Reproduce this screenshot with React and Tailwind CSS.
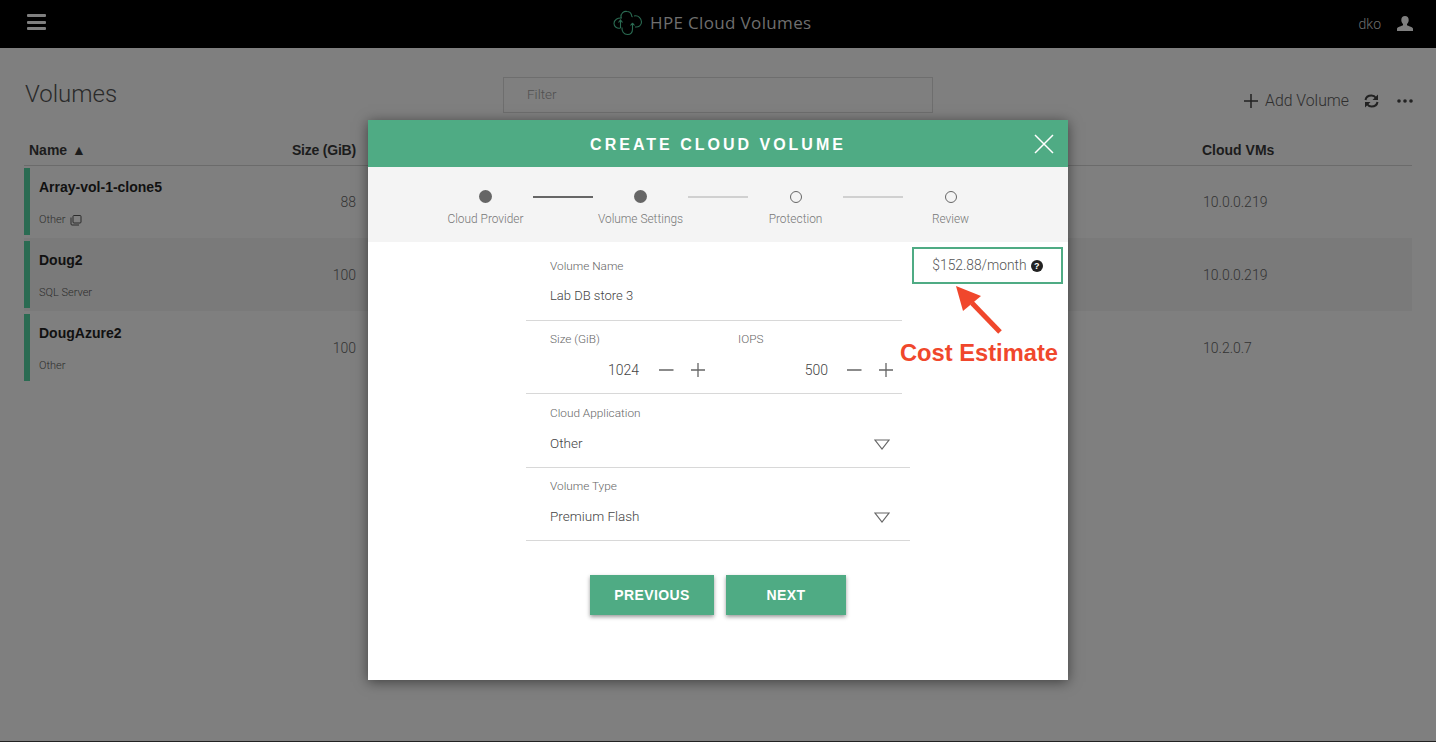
import React from "react";

const sans = "font-['Liberation_Sans',sans-serif]";
const light = "font-['Roboto',sans-serif] font-light";

function Row({ name, sub, size, vm, dark, copy }) {
  return (
    <div className={`h-[73px] flex ${dark ? "bg-[#7a7a7a]" : ""}`}>
      <div className="w-[6px] h-[67px] mt-[3px] bg-[#2a6b52]" />
      <div className="w-[266px] pl-[9px]">
        <div className={`mt-[14px] text-[14px] leading-[16px] font-bold text-[#111111] ${sans}`}>{name}</div>
        <div className={`mt-[18px] flex items-center gap-[5px] text-[11px] leading-[14px] text-[#2c2c2c] ${light}`}>
          {sub}
          {copy && (
            <svg width="12" height="12" viewBox="0 0 12 12" fill="none" stroke="#2c2c2c" strokeWidth="1">
              <rect x="3" y="1.5" width="8" height="7.5" rx="1" />
              <path d="M1 3.500v6.500a1 1 0 0 0 1 1h7" />
            </svg>
          )}
        </div>
      </div>
      <div className={`w-[60px] text-right mt-[28px] text-[14px] leading-[18px] text-[#333333] ${light}`}>{size}</div>
      <div className={`ml-[847px] mt-[28px] text-[14px] leading-[18px] text-[#333333] ${light}`}>{vm}</div>
    </div>
  );
}

function Dot({ filled }) {
  return (
    <div className="w-[13px] h-[13px] flex items-center justify-center">
      {filled ? (
        <div className="w-[13px] h-[13px] rounded-full bg-[#666666]" />
      ) : (
        <div className="w-[12px] h-[12px] ml-[1px] rounded-full border border-[#666666]" />
      )}
    </div>
  );
}

function StepLabel({ children }) {
  return (
    <div className={`w-[155px] text-center text-[11.900px] leading-[16px] text-[#777777] whitespace-nowrap ${light}`}>{children}</div>
  );
}

function PlusMinus({ className }) {
  return (
    <svg className={className} width="48" height="16" viewBox="0 0 48 16" fill="none" stroke="#666666" strokeWidth="1.300">
      <path d="M0 8h14.500M32 8h14M39 1v14" />
    </svg>
  );
}

function Caret() {
  return (
    <svg className="mt-[2px]" width="16" height="11" viewBox="0 0 16 11" fill="none" stroke="#666666" strokeWidth="1.200">
      <path d="M1 1h14L8 10z" />
    </svg>
  );
}

function Select({ label, value, height, pad }) {
  return (
    <div className={`w-[384px] pl-[24px] pr-[20px] border-b border-[#d8d8d8] ${height}`}>
      <div className={`text-[11.800px] leading-[16px] text-[#666666] ${pad} ${light}`}>{label}</div>
      <div className="mt-[13px] flex items-center justify-between">
        <div className={`text-[13.500px] leading-[18px] text-[#444444] ${light}`}>{value}</div>
        <Caret />
      </div>
    </div>
  );
}

export default function App() {
  return (
    <div className="relative w-[1436px] h-[742px] overflow-hidden bg-[#7f7f7f] border-b border-[#222222]">
      <header className="h-[48px] bg-black flex items-start">
        <div className="ml-[27px] mt-[14px] w-[19px] flex flex-col gap-[3.500px]">
          <div className="h-[3px] bg-[#7f7f7f] rounded-[1px]" />
          <div className="h-[3px] bg-[#7f7f7f] rounded-[1px]" />
          <div className="h-[3px] bg-[#7f7f7f] rounded-[1px]" />
        </div>
        <div className="ml-[567px] mt-[10px] flex items-center gap-[7px]">
          <svg width="30" height="26" viewBox="0 0 30 26" fill="none" stroke="#2a6b52" strokeWidth="1.100">
            <path d="M8 7.500C7.500 3 11 1 14 1.500c2.500 0 4 1.500 4.500 3.500 0 1 .3 1.500 1 2M21 6c4.500-1 7.500 2.500 7.500 6 0 3-2.500 5.500-6.500 5M9 8C4.500 7.500 1 10 1 13.500c0 3 3 5.500 6.500 4.500M9 17.500c-.5 4 2 7 5.500 7 3.500 0 5-2.500 5-5.500V13M7.500 11v7M5.500 12.500 7.500 10l2 2.500M19.500 13l-2 2.500M19.500 13l2 2.500" />
          </svg>
          <div className="text-[17px] leading-[24px] tracking-[0.350px] text-[#6f6f6f] font-['Open_Sans',sans-serif] whitespace-nowrap">HPE Cloud Volumes</div>
        </div>
        <div className="ml-auto mr-[23px] mt-[14px] flex items-start">
          <span className={`text-[14px] leading-[20px] text-[#6f6f6f] ${light}`}>dko</span>
          <svg className="ml-[16px] mt-[2px]" width="16" height="15" viewBox="0 0 16 15" fill="#7f7f7f">
            <path d="M8 0c2.300 0 3.700 1.600 3.700 4 0 1.700-.7 3.100-1.700 4v1.300c1 .7 5.400 1.500 6 3.300V15H0v-2.400c.6-1.800 5-2.600 6-3.300V8C5 7.100 4.300 5.700 4.300 4 4.300 1.600 5.700 0 8 0z" />
          </svg>
        </div>
      </header>

      <main>
        <div className="h-[80px] flex items-start pl-[25px] pr-[23px]">
          <h1 className={`w-[478px] mt-[30px] text-[24px] leading-[32px] text-[#2a2a2a] ${light}`}>Volumes</h1>
          <div className={`w-[430px] h-[36px] mt-[29px] border border-[#6e6e6e] pl-[23px] text-[13.500px] leading-[33px] text-[#505050] ${light}`}>Filter</div>
          <div className="ml-auto mt-[41px] flex items-center">
            <svg width="14" height="14" viewBox="0 0 14 14" stroke="#222222" strokeWidth="1.500"><path d="M7 0v14M0 7h14" /></svg>
            <span className={`ml-[7px] text-[15.800px] leading-[24px] text-[#2e2e2e] ${light}`}>Add Volume</span>
            <svg className="ml-[15px]" width="15" height="14" viewBox="0 0 15 14" fill="none" stroke="#222222" strokeWidth="2">
              <path d="M1.500 6C2 3 4.500 1.500 7.500 1.500c2 0 3.500 1 4.500 2.500M13.500 8c-.5 3-3 4.500-6 4.500-2 0-3.500-1-4.500-2.500" />
              <path d="M14 .5V6H8.500zM1 13.500V8h5.500z" fill="#222222" stroke="none" />
            </svg>
            <svg className="ml-[18px]" width="16" height="4" viewBox="0 0 16 4" fill="#222222">
              <circle cx="2" cy="2" r="1.800" /><circle cx="8" cy="2" r="1.800" /><circle cx="14" cy="2" r="1.800" />
            </svg>
          </div>
        </div>
        <div className={`mx-[24px] h-[38px] pt-[13px] border-b border-[#6b6b6b] flex text-[14px] leading-[18px] font-bold text-[#1c1c1c] ${sans}`}>
          <div className="w-[263px] pl-[5px]">Name <span className="ml-[1px]">▲</span></div>
          <div className="w-[69px] text-right tracking-[-0.200px] whitespace-nowrap">Size (GiB)</div>
          <div className="ml-[846px]">Cloud VMs</div>
        </div>
        <div className="mx-[24px] -mt-[1px]">
          <Row name="Array-vol-1-clone5" sub="Other" size="88" vm="10.0.0.219" copy />
          <Row name="Doug2" sub="SQL Server" size="100" vm="10.0.0.219" dark />
          <Row name="DougAzure2" sub="Other" size="100" vm="10.2.0.7" />
        </div>
      </main>

      <div className="absolute left-[368px] top-[120px] w-[700px] h-[560px] bg-white shadow-[0_2px_12px_rgba(0,0,0,0.5)]">
        <div className="h-[47px] pt-[2px] bg-[#4fab84] flex items-center justify-center relative">
          <div className={`text-[16px] font-bold tracking-[3px] text-white ${sans}`}>CREATE CLOUD VOLUME</div>
          <svg className="absolute right-[14px] top-[14px]" width="20" height="20" viewBox="0 0 20 20" stroke="white" strokeWidth="1.500"><path d="M1 1l18 18M19 1L1 19" /></svg>
        </div>
        <div className="h-[75px] bg-[#f4f4f4] pt-[23px]">
          <div className="flex items-center gap-[41px] pl-[111px]">
            <Dot filled />
            <div className="w-[60px] h-[2px] bg-[#666666]" />
            <Dot filled />
            <div className="w-[60px] h-[2px] bg-[#d0d0d0]" />
            <Dot />
            <div className="w-[60px] h-[2px] bg-[#d0d0d0]" />
            <Dot />
          </div>
          <div className="flex pl-[40px] mt-[8px]">
            <StepLabel>Cloud Provider</StepLabel>
            <StepLabel>Volume Settings</StepLabel>
            <StepLabel>Protection</StepLabel>
            <StepLabel>Review</StepLabel>
          </div>
        </div>
        <div className="pl-[158px]">
          <div className="w-[376px] h-[79px] pl-[24px] border-b border-[#d8d8d8]">
            <div className={`pt-[16px] text-[11.800px] leading-[16px] text-[#666666] ${light}`}>Volume Name</div>
            <div className={`mt-[13px] text-[13px] leading-[18px] text-[#444444] ${light}`}>Lab DB store 3</div>
          </div>
          <div className="w-[376px] h-[73px] pl-[24px] border-b border-[#d8d8d8]">
            <div className={`pt-[10px] flex text-[11.800px] leading-[16px] text-[#666666] ${light}`}>
              <div className="w-[188px]">Size (GiB)</div>
              <div>IOPS</div>
            </div>
            <div className={`mt-[14px] flex items-center text-[14px] leading-[18px] text-[#444444] ${light}`}>
              <div className="w-[89px] text-right">1024</div>
              <PlusMinus className="ml-[20px]" />
              <div className="w-[121px] text-right">500</div>
              <PlusMinus className="ml-[19px]" />
            </div>
          </div>
          <Select label="Cloud Application" value="Other" height="h-[74px]" pad="pt-[11px]" />
          <Select label="Volume Type" value="Premium Flash" height="h-[73px]" pad="pt-[10px]" />
          <div className="w-[384px] flex justify-center gap-[12px] mt-[34px]">
            <button className={`w-[124px] h-[40px] bg-[#4fab84] text-white text-[14px] font-bold tracking-[0.400px] shadow-[0_2px_4px_rgba(0,0,0,0.4)] ${sans}`}>PREVIOUS</button>
            <button className={`w-[120px] h-[40px] bg-[#4fab84] text-white text-[14px] font-bold tracking-[0.400px] shadow-[0_2px_4px_rgba(0,0,0,0.4)] ${sans}`}>NEXT</button>
          </div>
        </div>

        <div className="absolute left-[544px] top-[127px] w-[151px] h-[37px] border-2 border-[#4fab84] bg-white flex items-center justify-center gap-[4px]">
          <span className={`text-[13.800px] text-[#555555] ${light}`}>$152.88/month</span>
          <span className={`w-[12px] h-[12px] rounded-full bg-[#222222] text-white text-[9px] leading-[12px] font-bold text-center ${sans}`}>?</span>
        </div>
        <svg className="absolute left-[585px] top-[164px]" width="52" height="52" viewBox="0 0 52 52">
          <path d="M47 48 19 19" stroke="#f0472c" strokeWidth="5" />
          <path d="M3 2 28 12 10 27z" fill="#f0472c" />
        </svg>
        <div className={`absolute left-[532px] top-[219px] text-[23.700px] leading-[28px] font-bold text-[#f0472c] whitespace-nowrap ${sans}`}>Cost Estimate</div>
      </div>
    </div>
  );
}
